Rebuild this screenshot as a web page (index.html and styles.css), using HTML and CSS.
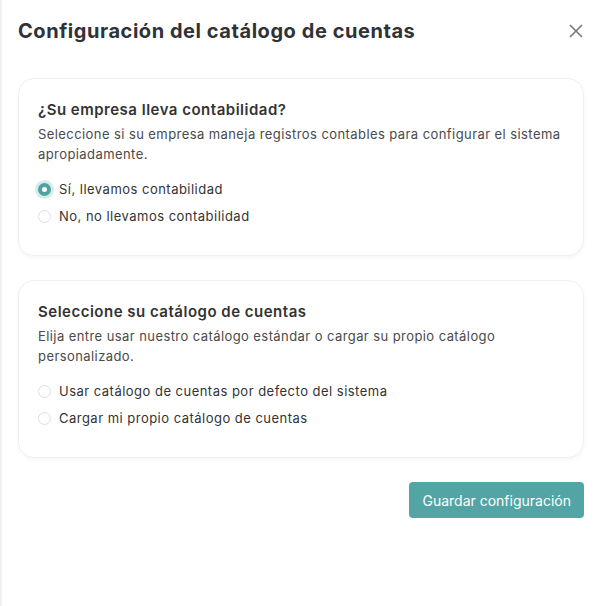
FILE: index.html
```html
<!DOCTYPE html>
<html lang="es">
<head>
<meta charset="utf-8">
<link rel="stylesheet" href="styles.css">
</head>
<body>
<div class="modal">
  <div class="header">
    <h1 class="title">Configuración del catálogo de cuentas</h1>
    <button class="close" aria-label="Cerrar">
      <svg width="14" height="14" viewBox="0 0 14 14"><path d="M1 1L13 13M13 1L1 13" stroke="#777" stroke-width="1.6" fill="none"/></svg>
    </button>
  </div>
  <div class="body">
    <section class="card">
      <h2 class="card-title">¿Su empresa lleva contabilidad?</h2>
      <p class="card-desc">Seleccione si su empresa maneja registros contables para configurar el sistema apropiadamente.</p>
      <div class="options">
        <label class="option"><span class="radio checked"></span>Sí, llevamos contabilidad</label>
        <label class="option"><span class="radio"></span>No, no llevamos contabilidad</label>
      </div>
    </section>
    <section class="card">
      <h2 class="card-title">Seleccione su catálogo de cuentas</h2>
      <p class="card-desc">Elija entre usar nuestro catálogo estándar o cargar su propio catálogo personalizado.</p>
      <div class="options">
        <label class="option"><span class="radio"></span>Usar catálogo de cuentas por defecto del sistema</label>
        <label class="option"><span class="radio"></span>Cargar mi propio catálogo de cuentas</label>
      </div>
    </section>
    <div class="footer">
      <button class="save">Guardar configuración</button>
    </div>
  </div>
</div>
</body>
</html>
```
FILE: styles.css
```css
* { box-sizing: border-box; }
html, body { margin: 0; padding: 0; background: #fff; }
body { font-family: Inter, "Noto Sans", sans-serif; color: #333; }
.modal {
  width: 599px;
  height: 606px;
  border-left: 2px solid #f2f2f2;
  background: #fff;
}
.header {
  display: flex;
  align-items: center;
  justify-content: space-between;
  padding: 10px 15px 8px 16px;
  height: 60px;
}
.title {
  margin: 0;
  font-size: 20px;
  font-weight: 700;
  color: #2f3237;
  line-height: 28px;
  letter-spacing: 0.55px;
}
.close {
  border: 0;
  background: none;
  padding: 0;
  width: 16px;
  height: 16px;
  display: flex;
  align-items: center;
  justify-content: center;
}
.body {
  padding: 18px 15px 0 16px;
  display: flex;
  flex-direction: column;
  gap: 24px;
}
.card {
  border: 1px solid #eeeff1;
  border-radius: 16px;
  box-shadow: 0 2px 4px rgba(0,0,0,0.04);
  padding: 20px 19px 29px 19px;
}
.card-title {
  margin: 0 0 3px;
  font-size: 15px;
  font-weight: 600;
  color: #333;
  line-height: 22px;
  letter-spacing: 0.5px;
}
.card-desc {
  margin: 0;
  font-size: 13px;
  line-height: 20px;
  color: #4a4a4a;
  letter-spacing: 0.42px;
}
.options {
  margin-top: 15px;
  display: flex;
  flex-direction: column;
  gap: 7px;
}
.option {
  display: flex;
  align-items: center;
  gap: 8px;
  font-size: 13px;
  line-height: 20px;
  color: #333;
  letter-spacing: 0.48px;
}
.radio {
  width: 13px;
  height: 13px;
  border-radius: 50%;
  border: 1px solid #dedede;
  background: #fff;
  flex: none;
}
.radio.checked {
  border: 4px solid #4fa39f;
  background: #fff;
  box-shadow: 0 0 0 3px #d7ebe9;
}
.footer {
  display: flex;
  justify-content: flex-end;
}
.save {
  background: #52a5a4;
  color: #fff;
  border: 0;
  border-radius: 4px;
  height: 36px;
  padding: 0 13px;
  font-family: inherit;
  font-size: 14px;
}
```
